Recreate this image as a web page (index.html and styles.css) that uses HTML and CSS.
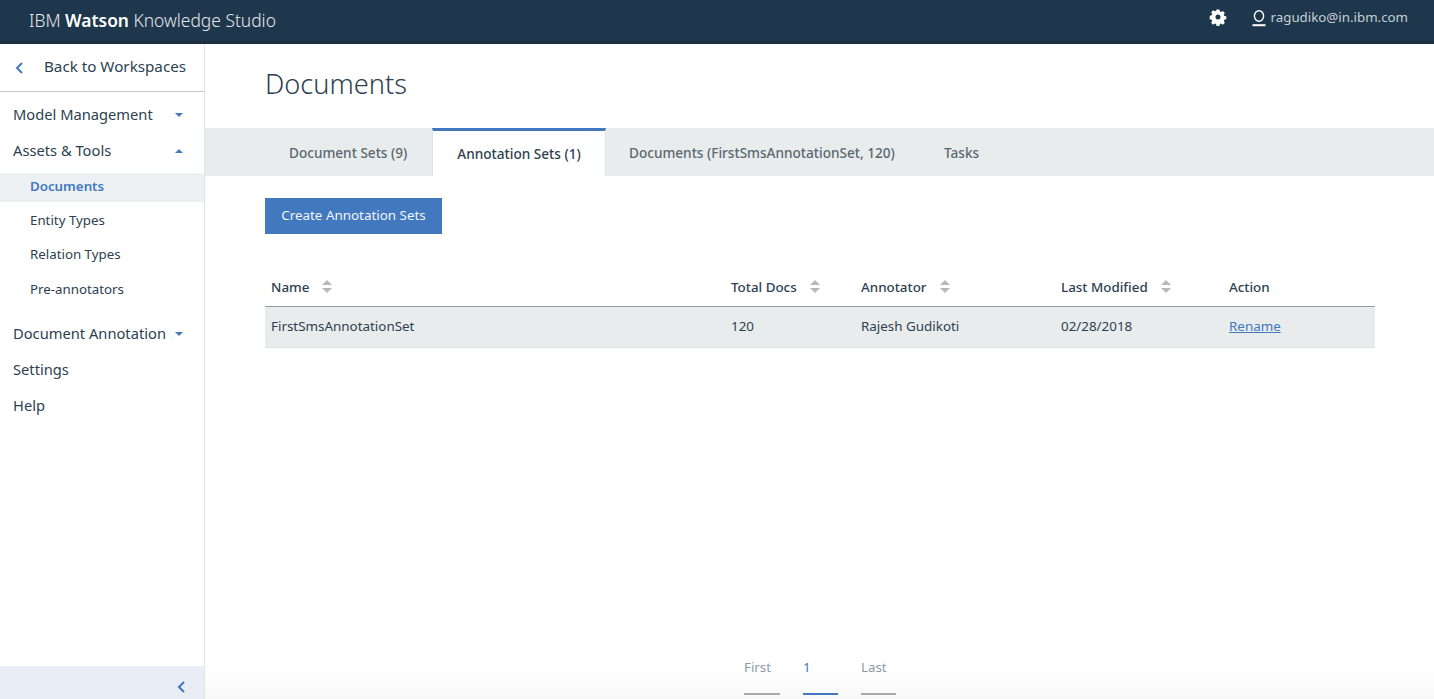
FILE: index.html
```html
<!DOCTYPE html>
<html lang="en">
<head>
<meta charset="utf-8">
<title>Documents</title>
<link rel="stylesheet" href="styles.css">
</head>
<body>
<header class="topbar">
  <div class="brand">IBM <b>Watson</b> Knowledge Studio</div>
  <div class="top-actions">
    <svg class="gear" width="18" height="18" viewBox="0 0 18 18"><path fill="#fff" fill-rule="evenodd" d="M7.400 0.600h3.200l.5 2.200 1.300.6 2-1.200 2.200 2.300-1.200 1.900.6 1.400 2.200.5v3.200l-2.200.5-.6 1.300 1.200 2-2.200 2.200-2-1.200-1.300.6-.5 2.200H7.400l-.5-2.200-1.300-.6-2 1.200-2.200-2.200 1.200-2-.6-1.300-2.200-.5V7.500l2.200-.5.6-1.400-1.200-1.900L3.600 1.400l2 1.200 1.300-.6zM9 6.200a2.800 2.800 0 1 0 0 5.600 2.800 2.800 0 0 0 0-5.600z" transform="translate(.9 .9) scale(.9)"/></svg>
    <svg class="user" width="14" height="17" viewBox="0 0 14 17"><ellipse cx="7" cy="6" rx="4.600" ry="5.200" fill="none" stroke="#fff" stroke-width="1.400"/><path d="M.5 15.200h13" stroke="#fff" stroke-width="2" fill="none"/></svg>
    <span class="email">ragudiko@in.ibm.com</span>
  </div>
</header>
<div class="shell">
  <aside class="sidebar">
    <a class="back">
      <svg class="back-chev" width="10" height="14" viewBox="0 0 10 14"><path d="M8 2 3 7l5 5" fill="none" stroke="#4178be" stroke-width="2"/></svg>
      <span class="back-label">Back to Workspaces</span>
    </a>
    <nav class="nav">
      <div class="nav-item">Model Management<i class="caret down"></i></div>
      <div class="nav-item">Assets &amp; Tools<i class="caret up"></i></div>
      <div class="sub-item current">Documents</div>
      <div class="sub-item">Entity Types</div>
      <div class="sub-item">Relation Types</div>
      <div class="sub-item last">Pre-annotators</div>
      <div class="nav-item spaced">Document Annotation<i class="caret down"></i></div>
      <div class="nav-item">Settings</div>
      <div class="nav-item">Help</div>
    </nav>
    <div class="collapse">
      <svg width="10" height="14" viewBox="0 0 10 14"><path d="M8 2 3 7l5 5" fill="none" stroke="#4178be" stroke-width="2"/></svg>
    </div>
  </aside>
  <main class="main">
    <h1 class="title">Documents</h1>
    <div class="tabs">
      <div class="tab t1">Document Sets (9)</div>
      <div class="tab active">Annotation Sets (1)</div>
      <div class="tab t3">Documents (FirstSmsAnnotationSet, 120)</div>
      <div class="tab t4">Tasks</div>
    </div>
    <div class="content">
      <button class="primary">Create Annotation Sets</button>
      <div class="table">
        <div class="row head">
          <div class="cell">Name<i class="sort"></i></div>
          <div class="cell">Total Docs<i class="sort"></i></div>
          <div class="cell">Annotator<i class="sort"></i></div>
          <div class="cell">Last Modified<i class="sort"></i></div>
          <div class="cell">Action</div>
        </div>
        <div class="row body">
          <div class="cell">FirstSmsAnnotationSet</div>
          <div class="cell">120</div>
          <div class="cell">Rajesh Gudikoti</div>
          <div class="cell">02/28/2018</div>
          <div class="cell"><a class="link">Rename</a></div>
        </div>
      </div>
    </div>
    <div class="pager">
      <div class="page p-first">First</div>
      <div class="page p-num">1</div>
      <div class="page p-last">Last</div>
    </div>
  </main>
</div>
</body>
</html>
```
FILE: styles.css
```css
* { box-sizing: border-box; }
html, body { margin: 0; height: 699px; overflow: hidden; }
body { font-family: "Noto Sans", "Open Sans", sans-serif; color: #2d3f50; background: #fff; display: flex; flex-direction: column; }
.topbar { height: 44px; flex: none; background: #1f374d; border-bottom: 3px solid #1b2f40; display: flex; justify-content: space-between; align-items: center; padding: 0 26px 2px 29px; color: #fff; }
.brand { font-size: 17.400px; font-weight: 300; color: #e4e8ec; }
.brand b { font-weight: 600; color: #fff; }
.top-actions { display: flex; align-items: center; margin-bottom: 5px; }
.gear { margin-right: 25px; }
.user { margin-right: 5px; margin-top: 2px; }
.email { font-size: 13.300px; color: #c6ced5; margin-bottom: 1px; }
.shell { flex: 1; display: flex; min-height: 0; }
.sidebar { width: 205px; flex: none; border-right: 1px solid #dfe3e6; display: flex; flex-direction: column; }
.back { height: 48px; display: flex; align-items: center; padding-left: 14px; border-bottom: 1px solid #c7c7c7; font-size: 15.200px; color: #2d3f50; flex: none; }
.back-chev { margin-right: 20px; }
.back-label { padding-bottom: 4px; }
.nav { flex: 1; padding-top: 4px; }
.nav-item { height: 36px; display: flex; align-items: center; padding: 0 21px 0 13px; font-size: 14.700px; color: #2d3f50; }
.nav-item.spaced { margin-top: 9px; }
.caret { width: 0; height: 0; margin-left: auto; margin-top: 2px; border-left: 4px solid transparent; border-right: 4px solid transparent; }
.caret.down { border-top: 4px solid #4178be; }
.caret.up { border-bottom: 4px solid #4178be; }
.sub-item { height: 34px; display: flex; align-items: center; padding-left: 30px; font-size: 13.300px; color: #2d3f50; }
.sub-item.current { background: #eef1f4; color: #4178be; font-weight: 600; height: 29px; margin: 5px 0 1px; padding-bottom: 3px; }
.sub-item.last { height: 35px; padding-top: 1px; }
.collapse { height: 33px; flex: none; background: #e9edf5; display: flex; align-items: center; justify-content: flex-end; padding-right: 18px; padding-top: 9px; }
.main { flex: 1; display: flex; flex-direction: column; min-width: 0; background: linear-gradient(#fff 0, #fff 625px, #f8f8f8 655px); }
.title { margin: 0; height: 84px; flex: none; padding: 22px 0 0 60px; font-size: 27.200px; font-weight: 300; line-height: 36px; color: #2d3f50; }
.tabs { height: 48px; flex: none; background: #e9ecec; display: flex; font-size: 13.600px; font-weight: 500; color: #5a6872; }
.tab { display: flex; align-items: center; }
.t1 { margin-left: 84px; width: 143px; }
.active { width: 174px; justify-content: center; background: #fff; border-top: 3px solid #4178be; border-left: 1px solid #dfe3e6; border-right: 1px solid #dfe3e6; color: #2d3f50; }
.t3 { margin-left: 23px; width: 315px; }
.content { flex: 1; padding: 22px 59px 0 60px; }
.primary { display: block; width: 177px; height: 36px; border: 0; background: #4178be; color: #f2f5fa; font-family: inherit; font-size: 13.400px; padding: 0 0 2px; }
.table { margin-top: 35px; }
.row { display: grid; grid-template-columns: 460px 130px 200px 168px 1fr; align-items: center; padding: 0 0 2px 6px; font-size: 13.400px; }
.head { height: 38px; border-bottom: 1px solid #9b9b9b; font-weight: 500; }
.body { height: 41px; background: #e9ecec; border-bottom: 1px solid #dfe3e6; }
.cell { display: flex; align-items: center; }
.sort { margin-left: 13px; width: 10px; display: flex; flex-direction: column; gap: 3px; }
.sort::before, .sort::after { content: ""; width: 0; height: 0; border-left: 5px solid transparent; border-right: 5px solid transparent; }
.sort::before { border-bottom: 5px solid #b8b8b8; }
.sort::after { border-top: 5px solid #b8b8b8; }
.link { color: #4178be; text-decoration: underline; }
.pager { height: 45px; flex: none; display: flex; margin-left: 539px; font-size: 13.300px; color: #8c9ba5; }
.page { height: 41px; border-bottom: 2px solid #aaa; padding-top: 4px; }
.p-first { width: 36px; }
.p-num { width: 35px; margin-left: 23px; color: #4178be; border-bottom-color: #4178be; }
.p-last { width: 35px; margin-left: 23px; }
```
